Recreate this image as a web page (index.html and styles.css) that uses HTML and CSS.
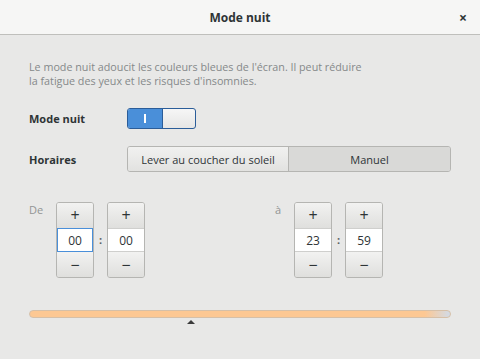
FILE: index.html
```html
<!DOCTYPE html>
<html>
<head>
<meta charset="utf-8">
<link rel="stylesheet" href="styles.css">
</head>
<body>
<div class="window">
  <div class="header">
    <span class="title">Mode nuit</span>
    <span class="close">×</span>
  </div>
  <div class="content">
    <p class="desc">Le mode nuit adoucit les couleurs bleues de l'écran. Il peut réduire<br>la fatigue des yeux et les risques d'insomnies.</p>
    <div class="row row-switch">
      <span class="label">Mode nuit</span>
      <div class="switch"><span class="on"><span class="bar-i"></span></span><span class="off"></span></div>
    </div>
    <div class="row row-sched">
      <span class="label">Horaires</span>
      <div class="seg">
        <span class="seg-btn">Lever au coucher du soleil</span>
        <span class="seg-btn active">Manuel</span>
      </div>
    </div>
    <div class="times">
      <div class="time-group from">
        <span class="tlabel">De</span>
        <div class="spin">
          <span class="sbtn">+</span>
          <span class="sval focus">00</span>
          <span class="sbtn">−</span>
        </div>
        <span class="colon">:</span>
        <div class="spin">
          <span class="sbtn">+</span>
          <span class="sval">00</span>
          <span class="sbtn">−</span>
        </div>
      </div>
      <div class="time-group to">
        <span class="tlabel">à</span>
        <div class="spin">
          <span class="sbtn">+</span>
          <span class="sval">23</span>
          <span class="sbtn">−</span>
        </div>
        <span class="colon">:</span>
        <div class="spin">
          <span class="sbtn">+</span>
          <span class="sval">59</span>
          <span class="sbtn">−</span>
        </div>
      </div>
    </div>
    <div class="bar-wrap">
      <div class="bar"></div>
      <div class="marker"></div>
    </div>
  </div>
</div>
</body>
</html>
```

FILE: styles.css
```css
* { box-sizing: border-box; }
html, body { margin: 0; padding: 0; }
body {
  font-family: "Open Sans", "DejaVu Sans", sans-serif;
  font-size: 11px;
  color: #2e3436;
  background: #e8e8e7;
}
.window {
  width: 480px;
  height: 359px;
  background: #e8e8e7;
  overflow: hidden;
}
.header {
  height: 35px;
  background: #f6f6f5;
  border-bottom: 1px solid #bfbfbc;
  display: flex;
  align-items: center;
  justify-content: center;
  position: relative;
}
.title {
  font-weight: bold;
  font-size: 12px;
  color: #2e3436;
}
.close {
  position: absolute;
  right: 13px;
  top: 8px;
  font-size: 14px;
  font-weight: bold;
  color: #2e3436;
}
.content {
  padding: 0 29px;
}
.desc {
  margin: 25px 0 0 0;
  color: #85898a;
  line-height: 14px;
  font-size: 10.75px;
}
.row {
  display: flex;
  align-items: center;
}
.label {
  width: 98px;
  font-weight: bold;
  font-size: 11px;
  color: #2e3436;
}
.row-switch { margin-top: 20px; height: 21px; }
.switch {
  width: 69px;
  height: 21px;
  border: 1px solid #2b5d99;
  border-radius: 3px;
  display: flex;
  overflow: hidden;
  background: linear-gradient(#f6f6f6, #e6e6e5);
}
.switch .on {
  width: 35px;
  background: #4a8fd9;
  border-right: 1px solid #2b5d99;
  display: flex;
  align-items: center;
  justify-content: center;
}
.bar-i {
  width: 2px;
  height: 9px;
  background: #fff;
}
.switch .off { flex: 1; }
.row-sched { margin-top: 17px; height: 26px; }
.seg {
  width: 324px;
  height: 26px;
  display: flex;
  border: 1px solid #b5b5b2;
  border-radius: 3px;
  overflow: hidden;
}
.seg-btn {
  display: flex;
  align-items: center;
  justify-content: center;
  font-size: 11px;
  color: #2e3436;
}
.seg-btn:first-child {
  width: 161px;
  background: linear-gradient(#f1f1f0, #e2e2e0);
  border-right: 1px solid #b5b5b2;
}
.seg-btn.active {
  flex: 1;
  background: #d9d9d7;
}
.times {
  display: flex;
  margin-top: 30px;
}
.time-group {
  display: flex;
  align-items: flex-start;
}
.from { width: 246px; }
.tlabel {
  color: #929595;
  font-size: 11px;
  margin-top: 0;
}
.from .tlabel { width: 27px; }
.to .tlabel { width: 19px; }
.colon {
  width: 13px;
  text-align: center;
  margin-top: 30px;
  color: #5a5e5f;
  font-size: 11px;
  font-weight: bold;
}
.spin {
  width: 38px;
  height: 76px;
  border: 1px solid #b5b5b2;
  border-radius: 3px;
  overflow: hidden;
  display: flex;
  flex-direction: column;
  background: linear-gradient(#efefee, #e0e0de);
}
.sbtn {
  height: 25px;
  display: flex;
  align-items: center;
  justify-content: center;
  font-size: 16px;
  color: #2e3436;
  background: linear-gradient(#f2f2f1, #dfdfdd);
}
.sval {
  height: 25px;
  background: #fff;
  border-top: 1px solid #cfcfcd;
  border-bottom: 1px solid #cfcfcd;
  display: flex;
  align-items: center;
  justify-content: center;
  font-size: 12px;
  color: #2e3436;
}
.sval.focus {
  border: 1px solid #4a8fd9;
}
.bar-wrap {
  margin-top: 32px;
  position: relative;
  height: 14px;
}
.bar {
  height: 8px;
  border-radius: 4px;
  border: 1px solid #d6c0a8;
  background: linear-gradient(to right, #fdc893 0%, #fdc893 94%, #d2dbe7 100%);
}
.marker {
  position: absolute;
  left: 158px;
  top: 10px;
  width: 0;
  height: 0;
  border-left: 4px solid transparent;
  border-right: 4px solid transparent;
  border-bottom: 4px solid #3b3b3b;
}
```
